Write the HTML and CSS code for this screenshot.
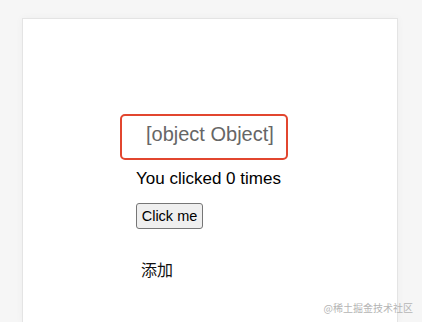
FILE: index.html
```html
<!DOCTYPE html>
<html lang="zh-CN">
<head>
    <meta charset="UTF-8">
    <meta name="viewport" content="width=device-width, initial-scale=1.0">
    <title>Demo</title>
    <link rel="stylesheet" href="styles.css">
</head>
<body>
    <div class="card">
        <div class="title-box">[object Object]</div>
        <p class="count">You clicked 0 times</p>
        <button type="button" class="btn">Click me</button>
        <div class="add">添加</div>
    </div>
    <div class="watermark">@稀土掘金技术社区</div>
</body>
</html>
```

FILE: styles.css
```css
html, body {
    height: 100%;
}
body {
    font-family: "Liberation Sans", Arial, "Noto Sans CJK SC", sans-serif;
    margin: 0;
    padding: 18px 0 0 22px;
    box-sizing: border-box;
    background-color: #f6f6f6;
    overflow: hidden;
    position: relative;
}
.card {
    width: 376px;
    height: 304px;
    background-color: #fff;
    border: 1px solid #e4e4e4;
    border-bottom: none;
    box-shadow: 0 0 8px rgba(0, 0, 0, 0.04);
    padding: 95px 0 0 113px;
    box-sizing: border-box;
}
.title-box {
    width: 168px;
    height: 46px;
    box-sizing: border-box;
    margin-left: -16px;
    padding-left: 24px;
    border: 2.5px solid #e2462f;
    border-radius: 5px;
    font-size: 20px;
    line-height: 36px;
    color: #666;
}
.count {
    margin: 9px 0 0;
    font-size: 17px;
    line-height: 20px;
    color: #000;
}
.btn {
    display: block;
    margin-top: 14px;
    width: 67px;
    height: 26px;
    padding: 0;
    font-family: "Liberation Sans", Arial, sans-serif;
    font-size: 14.5px;
    color: #000;
    background-color: #efefef;
    border: 1px solid #767676;
    border-radius: 3px;
}
.add {
    margin: 30px 0 0 5px;
    font-family: "Noto Sans CJK SC", sans-serif;
    font-size: 16px;
    line-height: 20px;
    color: #111;
}
.watermark {
    position: absolute;
    right: 9px;
    bottom: 8px;
    font-family: "Noto Sans CJK SC", sans-serif;
    font-size: 10px;
    line-height: 12px;
    color: #b5b5b5;
}
```
